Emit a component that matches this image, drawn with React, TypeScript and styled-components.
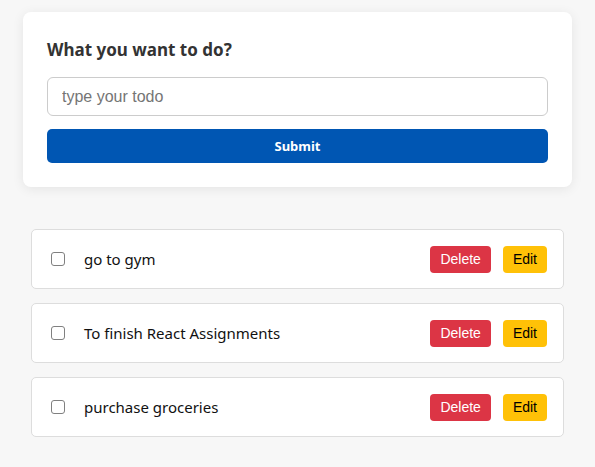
import React from "react";
import styled, { createGlobalStyle } from "styled-components";

const Global = createGlobalStyle`
  html, body { margin: 0; padding: 0; background: #f7f7f7; }
  body { font-family: "Noto Sans", "Open Sans", sans-serif; }
  * { box-sizing: border-box; }
`;

const Page = styled.div`
  display: flex;
  flex-direction: column;
  align-items: center;
  padding: 12px 0 30px;
`;

const FormCard = styled.form`
  width: 549px;
  background: #fff;
  border-radius: 8px;
  box-shadow: 0 2px 12px rgba(0, 0, 0, 0.08);
  padding: 24px;
  display: flex;
  flex-direction: column;
`;

const Heading = styled.h2`
  margin: 0 0 14px;
  font-size: 17px;
  font-weight: 700;
  color: #333;
  line-height: 27px;
`;

const Input = styled.input`
  height: 39px;
  border: 1px solid #ccc;
  border-radius: 6px;
  padding: 0 14px;
  font-family: "Liberation Sans", Arial, sans-serif;
  font-size: 16px;
  outline: none;
  &::placeholder { color: #757575; }
`;

const SubmitButton = styled.button`
  margin-top: 13px;
  height: 34px;
  border: none;
  border-radius: 5px;
  background: #0056b3;
  color: #fff;
  font-family: "Noto Sans", sans-serif;
  font-weight: 700;
  font-size: 13px;
`;

const List = styled.ul`
  list-style: none;
  margin: 42px 0 0;
  padding: 0;
  width: 533px;
  display: flex;
  flex-direction: column;
  gap: 14px;
`;

const Item = styled.li`
  height: 60px;
  background: #fff;
  border: 1px solid #ddd;
  border-radius: 5px;
  display: flex;
  align-items: center;
  padding: 0 16px 0 19px;
`;

const Check = styled.input`
  appearance: none;
  width: 14px;
  height: 14px;
  margin: 0 19px 0 0;
  border: 1.5px solid #808080;
  border-radius: 3px;
  background: #fff;
`;

const Label = styled.span`
  flex: 1;
  font-size: 15px;
  color: #111;
`;

const ActionButton = styled.button<{ $variant: "danger" | "warning" }>`
  height: 27px;
  padding: 0 10px;
  border: none;
  border-radius: 4px;
  font-family: "Liberation Sans", Arial, sans-serif;
  font-size: 14px;
  margin-left: 12px;
  background: ${(p) => (p.$variant === "danger" ? "#dc3545" : "#ffc107")};
  color: ${(p) => (p.$variant === "danger" ? "#fff" : "#000")};
`;

const todos = ["go to gym", "To finish React Assignments", "purchase groceries"];

export default function App() {
  return (
    <>
      <Global />
      <Page>
        <FormCard onSubmit={(e) => e.preventDefault()}>
          <Heading>What you want to do?</Heading>
          <Input placeholder="type your todo" />
          <SubmitButton type="submit">Submit</SubmitButton>
        </FormCard>
        <List>
          {todos.map((t) => (
            <Item key={t}>
              <Check type="checkbox" />
              <Label>{t}</Label>
              <ActionButton $variant="danger">Delete</ActionButton>
              <ActionButton $variant="warning">Edit</ActionButton>
            </Item>
          ))}
        </List>
      </Page>
    </>
  );
}
